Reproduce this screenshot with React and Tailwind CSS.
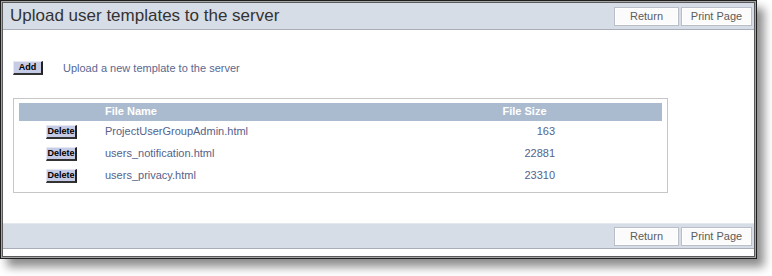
import React from 'react';

const files = [
    { name: 'ProjectUserGroupAdmin.html', size: '163' },
    { name: 'users_notification.html', size: '22881' },
    { name: 'users_privacy.html', size: '23310' },
];

function BarButton({ children, w }) {
    return (
        <button
            className={`h-[19px] ${w} border border-[#b9bec7] bg-[#fbfbfb] shadow-[inset_0_0_0_1px_#ffffff] text-[11px] text-[#5c5c5c] leading-none`}
        >
            {children}
        </button>
    );
}

function SmallButton({ children, w }) {
    return (
        <button
            className={`h-[14px] ${w} bg-[#c6cbe6] border-t border-l border-t-[#e6e8f4] border-l-[#e6e8f4] border-r-2 border-b-2 border-r-[#222] border-b-[#333] text-[9px] font-bold text-black leading-none`}
        >
            {children}
        </button>
    );
}

function ButtonBar() {
    return (
        <div className="flex gap-[2px]">
            <BarButton w="w-[65px]">Return</BarButton>
            <BarButton w="w-[71px]">Print Page</BarButton>
        </div>
    );
}

export default function App() {
    return (
        <div className="w-[772px] h-[276px] bg-white" style={{ fontFamily: '"Liberation Sans", Arial, sans-serif' }}>
            <div className="w-[757px] h-[259px] border border-[#1e1e1e] shadow-[7px_8px_9px_rgba(0,0,0,0.45)]">
                <div className="h-full border border-[#a4a4a4]">
                    <div className="h-full border border-[#5a5a5a] flex flex-col bg-white">
                        <header className="h-[27px] bg-[#d6dde7] border-b border-[#a9afba] flex items-start justify-between">
                            <h1 className="pl-[7px] pt-[3px] text-[17px] text-[#333] leading-[20px]">
                                Upload user templates to the server
                            </h1>
                            <div className="pt-[4px] pr-[2px]">
                                <ButtonBar />
                            </div>
                        </header>

                        <main className="h-[193px] pl-[10px]">
                            <div className="mt-[30px] flex items-center gap-[20px]">
                                <SmallButton w="w-[30px]">Add</SmallButton>
                                <span className="text-[11px] text-[#5a6890]">Upload a new template to the server</span>
                            </div>

                            <div className="mt-[21px] w-[655px] border border-[#c6c6c6] px-[5px] pt-[4px] pb-[5px]">
                                <div className="grid grid-cols-[85px_388px_65px_1fr] h-[18px] bg-[#abbbcf] text-[11px] font-bold text-white items-center">
                                    <div />
                                    <div className="pl-[1px]">File Name</div>
                                    <div className="text-center">File Size</div>
                                    <div />
                                </div>
                                {files.map((f) => (
                                    <div
                                        key={f.name}
                                        className="grid grid-cols-[85px_388px_65px_1fr] h-[22px] items-center text-[11px] text-[#55628a]"
                                    >
                                        <div className="flex justify-center">
                                            <SmallButton w="w-[31px]">Delete</SmallButton>
                                        </div>
                                        <div className="pl-[1px]">{f.name}</div>
                                        <div className="text-right pr-[2px]">{f.size}</div>
                                        <div />
                                    </div>
                                ))}
                            </div>
                        </main>

                        <footer className="h-[26px] bg-[#d6dde7] border-t border-[#e3e7ee] border-b border-b-[#a9afba] flex items-center justify-end pr-[2px]">
                            <ButtonBar />
                        </footer>
                        <div className="flex-1 bg-white" />
                    </div>
                </div>
            </div>
        </div>
    );
}
